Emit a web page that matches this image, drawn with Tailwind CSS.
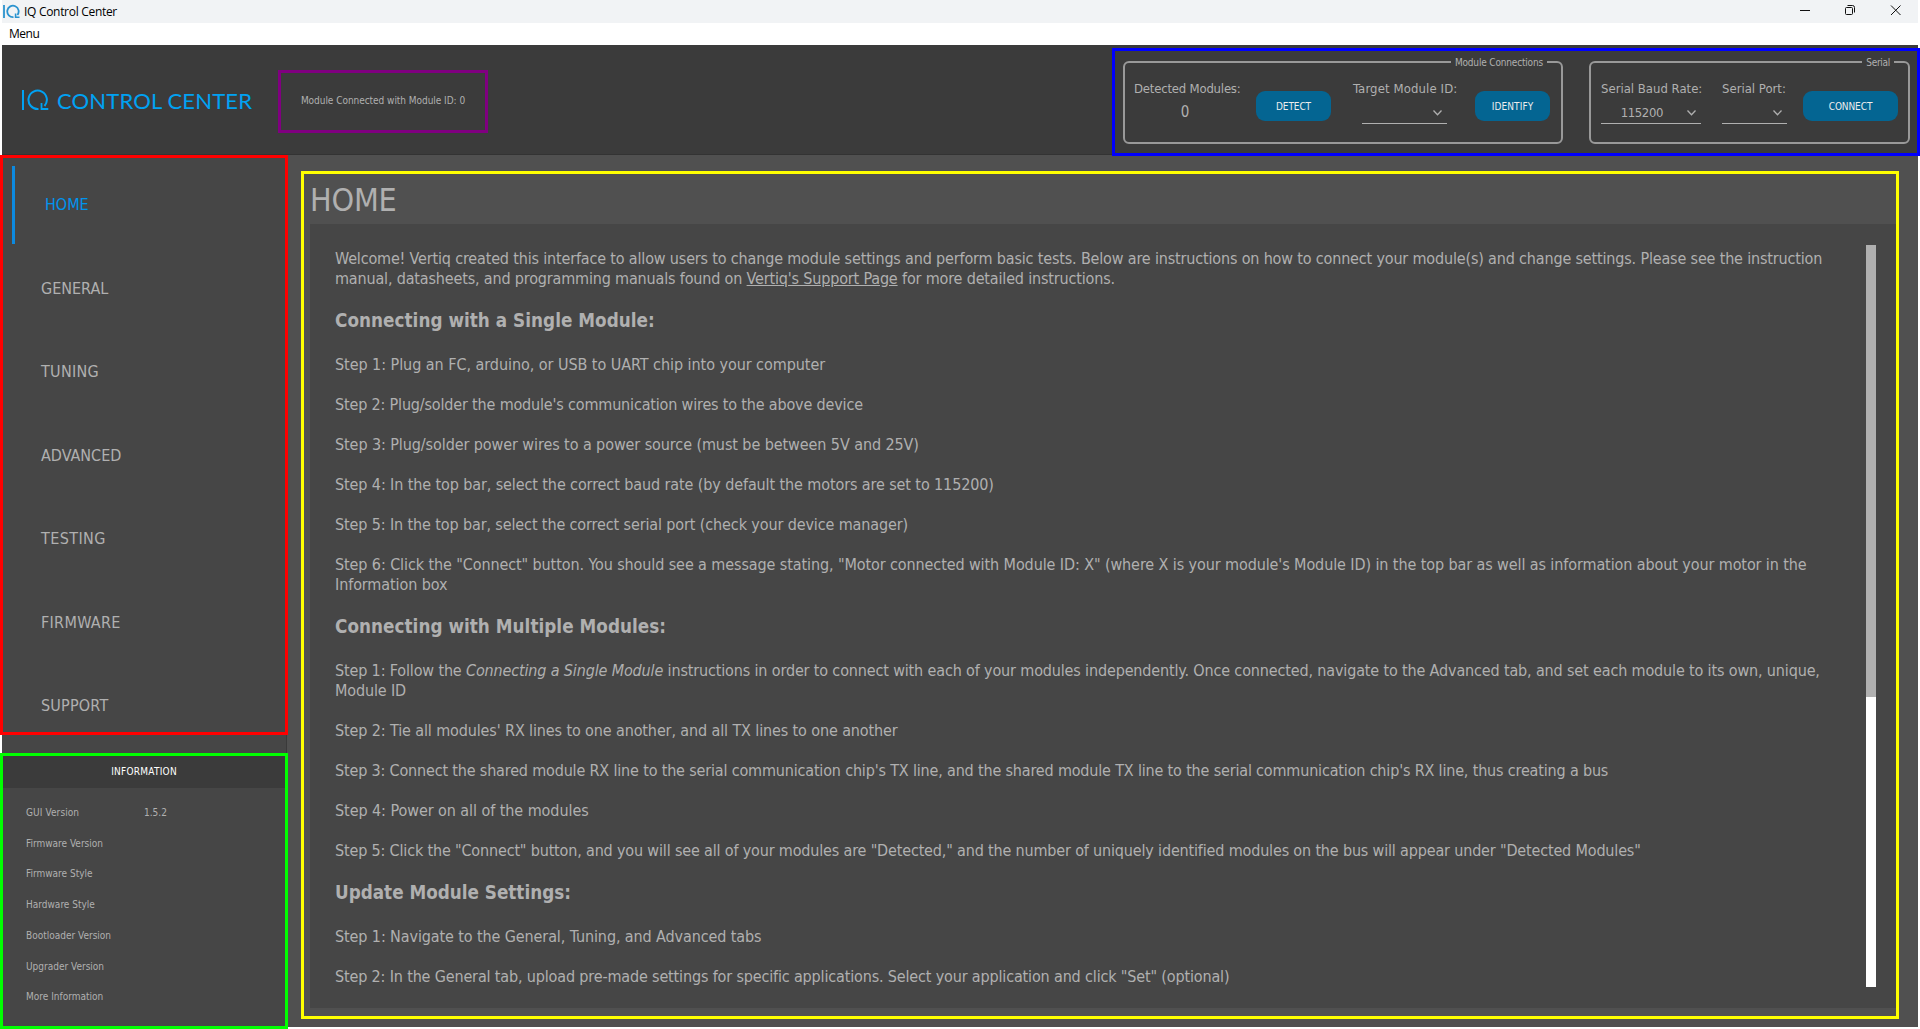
<!DOCTYPE html>
<html lang="en">
<head>
<meta charset="utf-8">
<title>IQ Control Center</title>
<script src="https://cdn.jsdelivr.net/npm/@tailwindcss/browser@4"></script>
</head>
<body class="bg-white">
<div class="relative w-[1920px] h-[1029px] overflow-hidden bg-white pl-[2px] pr-[2px] font-['DejaVu_Sans_Condensed','DejaVu_Sans',sans-serif] text-[#b0b0b0]">

  <!-- Title bar -->
  <div class="h-[23px] bg-[#f1f3f5] flex items-center justify-between text-black">
    <div class="flex items-center gap-[4px] pl-px">
      <svg class="w-[17px] h-[15px]" viewBox="0 0 17 15" fill="none" stroke="#2b93cf" stroke-width="1.8"><path d="M1 1v13M14.4 11A5.700 5.700 0 1 0 10.500 13.100"/><path d="M16.500 13.200H12.600V9.500" stroke-width="1.600"/></svg>
      <span class="font-['Open_Sans',sans-serif] text-[12px] leading-[23px] tracking-[-0.3px]">IQ Control Center</span>
    </div>
    <svg class="w-[110px] h-[23px] mr-[11px]" viewBox="0 0 110 23" fill="none" stroke="#111" stroke-width="1"><path d="M3 10.5h10"/><rect x="48.5" y="7.5" width="7" height="7" rx="1"/><path d="M50.5 5.5h5a2 2 0 0 1 2 2v5"/><path d="M94 5.500l9.500 9.500M103.500 5.500l-9.500 9.500"/></svg>
  </div>

  <!-- Menu bar -->
  <div class="h-[22px] bg-white text-black flex items-center pl-[7px] font-['Open_Sans',sans-serif] text-[12px] tracking-[-0.5px]">Menu</div>

  <!-- Header -->
  <header class="h-[110px] bg-[#3b3b3b] border-b border-[#333] flex">
    <div class="w-[277px] shrink-0 -mr-px flex items-start pl-[19px] pt-[44px] text-[#00a2f3]">
      <svg class="w-[28px] h-[22px] shrink-0" viewBox="0 0 28 22" fill="none" stroke="currentColor" stroke-width="2"><path d="M2 1v20M23.500 17A9.200 9.200 0 1 0 17.500 20"/><path d="M27.300 20h-6.800v-6" stroke-width="1.800"/></svg>
      <span class="ml-[8px] mt-[2px] font-['Lato',sans-serif] text-[22px] leading-[20px] tracking-[0.15px] whitespace-nowrap">CONTROL CENTER</span>
    </div>
    <div class="w-[210px] h-[63px] mt-[25px] border-3 border-[#800080] flex items-center justify-center text-[10px] tracking-[-0.04px] whitespace-nowrap pb-[2px]">Module Connected with Module ID: 0</div>

    <div class="ml-auto mr-[8px] mt-4 flex gap-[26px]">
      <!-- Module connections -->
      <section class="relative w-[440px] h-[83px] border-2 border-[#999] rounded-[6px] flex">
        <div class="absolute right-[14px] top-[-8px] bg-[#3b3b3b] px-1 text-[10px] leading-[16px] tracking-[-0.17px]">Module Connections</div>
        <div class="ml-[9px] mt-[17px] w-[107px] flex flex-col">
          <span class="text-[13px] leading-[18px] tracking-[-0.2px] whitespace-nowrap">Detected Modules:</span>
          <span class="text-[15px] leading-[24px] text-center mt-[2px] pr-[5px]">0</span>
        </div>
        <div class="ml-[15px] mt-[28px] w-[75px] h-[30px] rounded-[9px] bg-[#046592] text-[#eee] text-[10px] tracking-[-0.1px] flex items-center justify-center">DETECT</div>
        <div class="ml-[22px] mt-[17px] w-[104px]">
          <div class="text-[13px] leading-[18px] tracking-[0.12px] whitespace-nowrap">Target Module ID:</div>
          <div class="ml-[9px] mt-[2px] w-[85px] h-[24px] border-b border-[#b0b0b0] flex items-center justify-end pr-[5px]">
            <svg class="w-[9px] h-[6px] mt-[3px]" viewBox="0 0 9 6" fill="none" stroke="#b0b0b0" stroke-width="1.300"><path d="M.5.5l4 4.200 4-4.200"/></svg>
          </div>
        </div>
        <div class="ml-[18px] mt-[28px] w-[75px] h-[30px] rounded-[9px] bg-[#046592] text-[#eee] text-[10px] tracking-[0.1px] flex items-center justify-center">IDENTIFY</div>
      </section>
      <!-- Serial -->
      <section class="relative w-[321px] h-[83px] border-2 border-[#999] rounded-[6px] flex">
        <div class="absolute right-[14px] top-[-8px] bg-[#3b3b3b] px-1 text-[10px] leading-[16px] tracking-[-0.3px]">Serial</div>
        <div class="ml-[10px] mt-[17px] w-[100px]">
          <div class="text-[13px] leading-[18px] whitespace-nowrap">Serial Baud Rate:</div>
          <div class="mt-[2px] h-[24px] border-b border-[#b0b0b0] flex items-center justify-end pr-[5px]">
            <span class="text-[13px] tracking-[-0.4px] mr-[24px] mt-[3px]">115200</span>
            <svg class="w-[9px] h-[6px] mt-[3px]" viewBox="0 0 9 6" fill="none" stroke="#b0b0b0" stroke-width="1.300"><path d="M.5.5l4 4.200 4-4.200"/></svg>
          </div>
        </div>
        <div class="ml-[21px] mt-[17px] w-[65px]">
          <div class="text-[13px] leading-[18px] whitespace-nowrap">Serial Port:</div>
          <div class="mt-[2px] h-[24px] border-b border-[#b0b0b0] flex items-center justify-end pr-[5px]">
            <svg class="w-[9px] h-[6px] mt-[3px]" viewBox="0 0 9 6" fill="none" stroke="#b0b0b0" stroke-width="1.300"><path d="M.5.5l4 4.200 4-4.200"/></svg>
          </div>
        </div>
        <div class="ml-[16px] mt-[28px] w-[95px] h-[30px] rounded-[9px] bg-[#046592] text-[#eee] text-[10px] tracking-[-0.1px] flex items-center justify-center">CONNECT</div>
      </section>
    </div>
  </header>

  <!-- Body -->
  <div class="h-[872px] bg-[#505050] flex">
    <aside class="w-[285px] h-full bg-[#464646] border-r border-[#3a3a3a] flex flex-col text-[16px]">
      <nav class="h-[598px] pt-[8px]">
        <div class="h-[84px] flex items-center text-[#0094ee]"><span class="w-[3px] h-[78px] ml-[10px] bg-[#0d8ae0]"></span><span class="ml-[30px]">HOME</span></div>
        <div class="h-[83.500px] flex items-center pl-[39px]">GENERAL</div>
        <div class="h-[83.500px] flex items-center pl-[39px] tracking-[0.3px]">TUNING</div>
        <div class="h-[83.500px] flex items-center pl-[39px]">ADVANCED</div>
        <div class="h-[83.500px] flex items-center pl-[39px] tracking-[0.4px]">TESTING</div>
        <div class="h-[83.500px] flex items-center pl-[39px] tracking-[0.3px]">FIRMWARE</div>
        <div class="h-[83.500px] flex items-center pl-[39px] tracking-[0.2px]">SUPPORT</div>
      </nav>
      <div class="h-[35px] bg-[#3b3b3b] text-white text-[10px] tracking-[0.25px] pt-[2px] flex items-center justify-center">INFORMATION</div>
      <div class="pt-[10px] pl-[24px] text-[10px] leading-[30.700px]">
        <div class="flex"><span class="w-[118px] tracking-[0.1px]">GUI Version</span><span>1.5.2</span></div>
        <div>Firmware Version</div>
        <div>Firmware Style</div>
        <div>Hardware Style</div>
        <div>Bootloader Version</div>
        <div>Upgrader Version</div>
        <div>More Information</div>
      </div>
    </aside>

    <main class="ml-[14px] mt-[16px] w-[1598px] h-[848px] border-3 border-[#ff0] pl-[6px] pt-[3px]">
      <h1 class="text-[32px] leading-[47px] tracking-[-0.2px]">HOME</h1>
      <div class="h-[784px] bg-[#464646] pt-[21px] pl-[25px] pr-[20px] flex justify-between">
        <article class="pt-[4px] text-[16px] leading-[20px] whitespace-nowrap">
          <p class="tracking-[-0.165px]">Welcome! Vertiq created this interface to allow users to change module settings and perform basic tests. Below are instructions on how to connect your module(s) and change settings. Please see the instruction</p>
          <p class="tracking-[-0.165px]">manual, datasheets, and programming manuals found on <a class="underline">Vertiq's Support Page</a> for more detailed instructions.</p>
          <h2 class="mt-[20px] text-[18.720px] leading-[24px] font-bold tracking-[0.04px]">Connecting with a Single Module:</h2>
          <div class="mt-[22px] flex flex-col gap-[20px]">
            <p class="tracking-[-0.05px]">Step 1: Plug an FC, arduino, or USB to UART chip into your computer</p>
            <p class="tracking-[-0.170px]">Step 2: Plug/solder the module's communication wires to the above device</p>
            <p class="tracking-[-0.085px]">Step 3: Plug/solder power wires to a power source (must be between 5V and 25V)</p>
            <p class="tracking-[-0.105px]">Step 4: In the top bar, select the correct baud rate (by default the motors are set to 115200)</p>
            <p class="tracking-[-0.120px]">Step 5: In the top bar, select the correct serial port (check your device manager)</p>
            <p class="tracking-[-0.099px]">Step 6: Click the "Connect" button. You should see a message stating, "Motor connected with Module ID: X" (where X is your module's Module ID) in the top bar as well as information about your motor in the<br>Information box</p>
          </div>
          <h2 class="mt-[20px] text-[18.720px] leading-[24px] font-bold tracking-[0.04px]">Connecting with Multiple Modules:</h2>
          <div class="mt-[22px] flex flex-col gap-[20px]">
            <p class="tracking-[-0.147px]">Step 1: Follow the <i>Connecting a Single Module</i> instructions in order to connect with each of your modules independently. Once connected, navigate to the Advanced tab, and set each module to its own, unique,<br>Module ID</p>
            <p class="tracking-[-0.120px]">Step 2: Tie all modules' RX lines to one another, and all TX lines to one another</p>
            <p class="tracking-[-0.170px]">Step 3: Connect the shared module RX line to the serial communication chip's TX line, and the shared module TX line to the serial communication chip's RX line, thus creating a bus</p>
            <p class="tracking-[-0.065px]">Step 4: Power on all of the modules</p>
            <p class="tracking-[-0.165px]">Step 5: Click the "Connect" button, and you will see all of your modules are "Detected," and the number of uniquely identified modules on the bus will appear under "Detected Modules"</p>
          </div>
          <h2 class="mt-[20px] text-[18.720px] leading-[24px] font-bold">Update Module Settings:</h2>
          <div class="mt-[22px] flex flex-col gap-[20px]">
            <p class="tracking-[-0.105px]">Step 1: Navigate to the General, Tuning, and Advanced tabs</p>
            <p class="tracking-[-0.155px]">Step 2: In the General tab, upload pre-made settings for specific applications. Select your application and click "Set" (optional)</p>
          </div>
        </article>
        <div class="w-[10px] h-[742px] bg-white shrink-0"><div class="h-[452px] bg-[#b0b0b0]"></div></div>
      </div>
    </main>
  </div>

  <!-- Highlight frames over the window regions -->
  <div class="absolute left-[1112px] top-[48px] w-[808px] h-[108px] border-3 border-[#00f]"></div>
  <div class="absolute left-0 top-[155px] w-[288px] h-[580px] border-3 border-[#f00]"></div>
  <div class="absolute left-0 top-[753px] w-[288px] h-[276px] border-3 border-[#0f0]"></div>
</div>
</body>
</html>
